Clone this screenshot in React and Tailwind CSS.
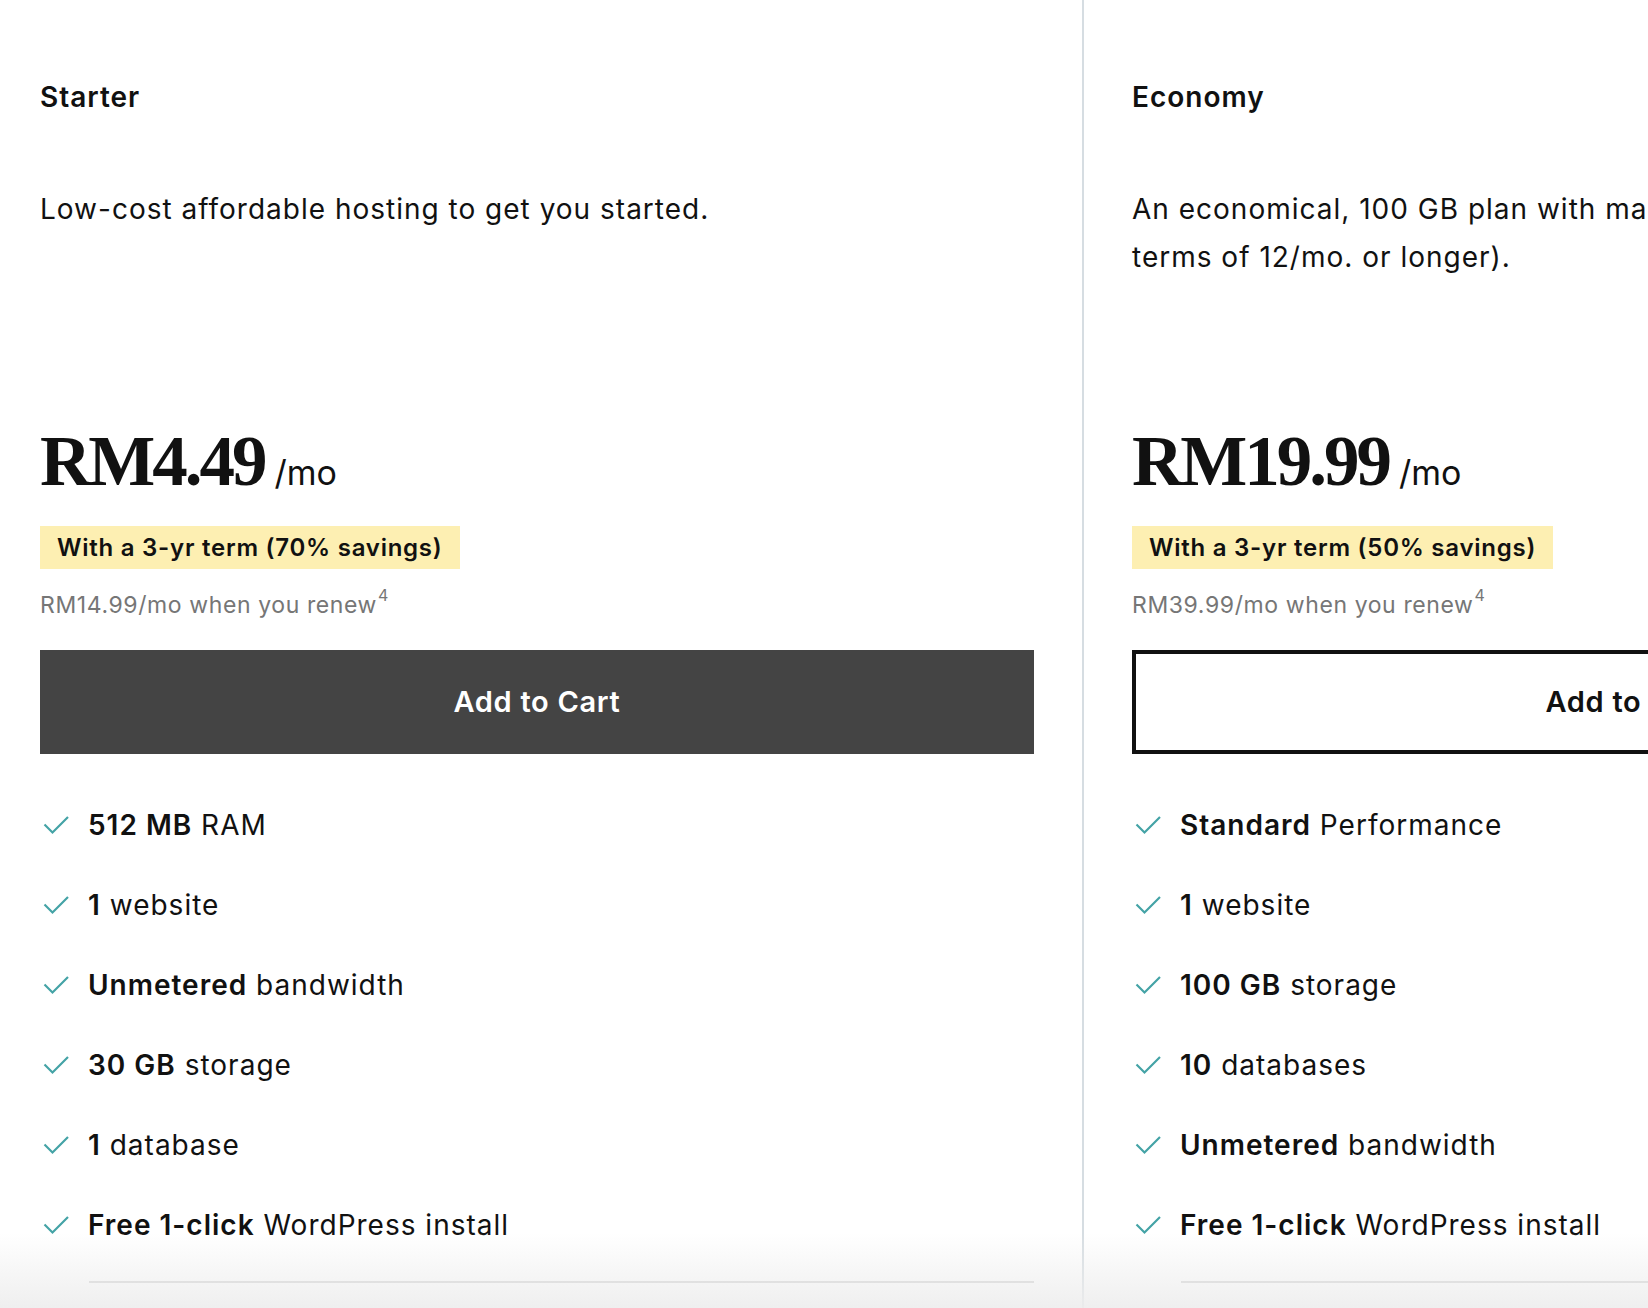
import React from "react";

const Check = () => (
  <svg width="26" height="20" viewBox="0 0 26 20" className="shrink-0" fill="none">
    <polyline points="1.5,9.5 9.5,17.5 25,2" stroke="#44a3a6" strokeWidth="2.2" strokeLinejoin="miter" />
  </svg>
);

const plans = [
  {
    name: "Starter",
    desc: ["Low-cost affordable hosting to get you started."],
    price: "RM4.49",
    badge: "With a 3-yr term (70% savings)",
    renew: "RM14.99/mo when you renew",
    primary: true,
    features: [
      ["512 MB", " RAM"],
      ["1", " website"],
      ["Unmetered", " bandwidth"],
      ["30 GB", " storage"],
      ["1", " database"],
      ["Free 1-click", " WordPress install"],
    ],
  },
  {
    name: "Economy",
    desc: [
      "An economical, 100 GB plan with many features (free domain with",
      "terms of 12/mo. or longer).",
    ],
    price: "RM19.99",
    badge: "With a 3-yr term (50% savings)",
    renew: "RM39.99/mo when you renew",
    primary: false,
    features: [
      ["Standard", " Performance"],
      ["1", " website"],
      ["100 GB", " storage"],
      ["10", " databases"],
      ["Unmetered", " bandwidth"],
      ["Free 1-click", " WordPress install"],
    ],
  },
];

function Card({ plan, first }) {
  return (
    <div
      className={
        first
          ? "w-[1084px] shrink-0 pl-[40px] pr-[48px] pt-[79px] border-r-2 border-[#d6dde2]"
          : "w-[1100px] shrink-0 pl-[48px] pr-[48px] pt-[79px]"
      }
    >
      <div className="w-[994px]">
        <h2 className="text-[28px] leading-[36px] font-semibold tracking-[1px] text-[#111]">{plan.name}</h2>
        <div className="mt-[70px] h-[241px] text-[28px] leading-[48px] tracking-[1px] text-[#111] whitespace-nowrap">
          {plan.desc.map((l, i) => (
            <div key={i}>{l}</div>
          ))}
        </div>
        <div className="flex items-baseline h-[71px] leading-none">
          <span
            className="text-[71px] font-bold tracking-[-3px] text-[#111]"
            style={{ fontFamily: '"Liberation Serif", "Times New Roman", serif' }}
          >
            {plan.price}
          </span>
          <span className="ml-[10px] text-[34px] text-[#111]">/mo</span>
        </div>
        <div className="mt-[29px] inline-block bg-[#fdefb2] px-[17px] py-[8px] text-[24px] leading-[27px] font-semibold tracking-[0.75px] text-[#111]">
          {plan.badge}
        </div>
        <div className="mt-[20px] text-[23px] leading-[32px] tracking-[0.6px] text-[#767676]">
          {plan.renew}
          <sup className="text-[16px] relative -top-[12px] align-baseline ml-[1px]">4</sup>
        </div>
        <button
          className={
            plan.primary
              ? "mt-[29px] w-full h-[104px] bg-[#444444] text-white text-[29px] font-semibold tracking-[0.7px]"
              : "mt-[29px] w-full h-[104px] bg-white border-4 border-[#111] text-[#111] text-[29px] font-semibold tracking-[0.7px]"
          }
        >
          Add to Cart
        </button>
        <ul className="mt-[51px] flex flex-col gap-[40px]">
          {plan.features.map(([b, r], i) => (
            <li key={i} className="flex items-center gap-[19px] pl-[3px] text-[28px] leading-[40px] tracking-[1px] text-[#111]">
              <Check />
              <span>
                <span className="font-semibold">{b}</span>
                {r}
              </span>
            </li>
          ))}
        </ul>
        <div className="mt-[36px] ml-[49px] h-[2px] bg-[#cfcfcf]" />
      </div>
    </div>
  );
}

export default function App() {
  return (
    <div
      className="relative w-[1648px] h-[1308px] overflow-hidden bg-white"
      style={{ fontFamily: 'Inter, "Noto Sans", sans-serif' }}
    >
      <div className="flex h-full">
        {plans.map((p, i) => (
          <Card key={i} plan={p} first={i === 0} />
        ))}
      </div>
      <div className="pointer-events-none absolute left-0 right-0 bottom-0 h-[75px] bg-gradient-to-b from-white/0 to-[#ededed]/90" />
    </div>
  );
}
